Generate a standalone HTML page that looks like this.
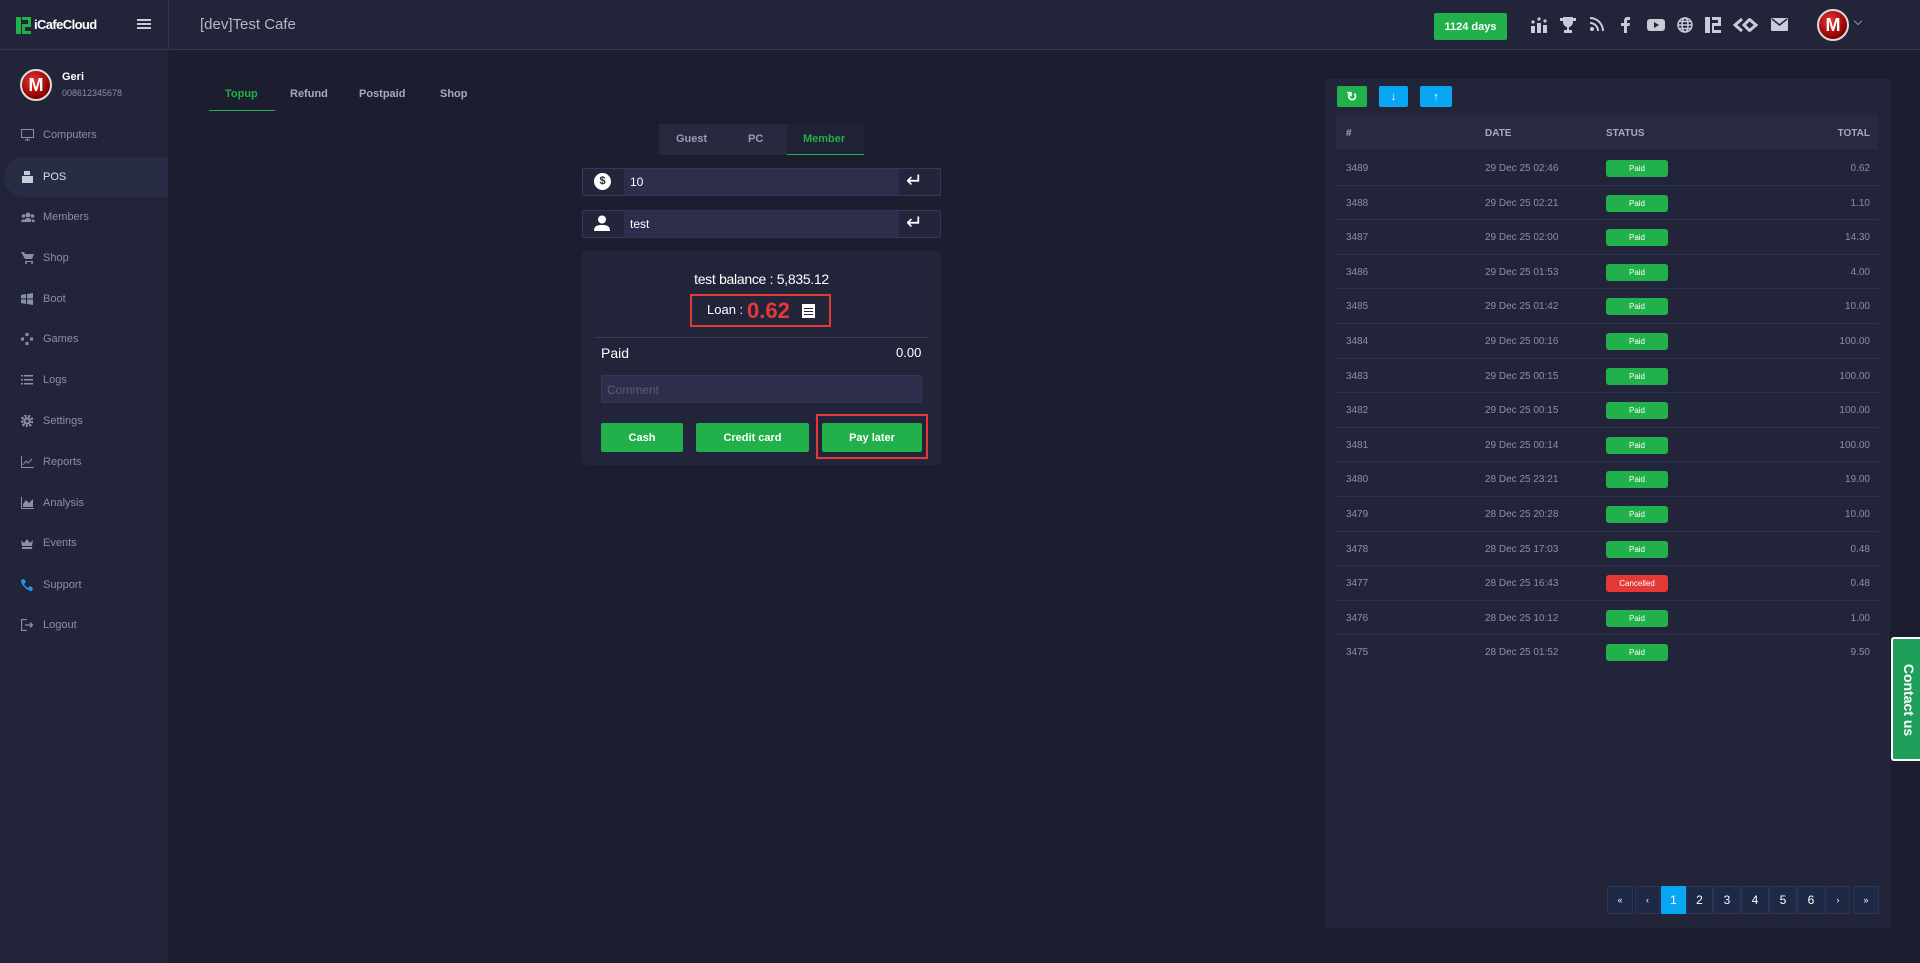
<!DOCTYPE html>
<html><head><meta charset="utf-8"><style>
*{box-sizing:border-box;margin:0;padding:0}
body{width:1920px;height:963px;background:#1c1d2e;font-family:"Liberation Sans",sans-serif;color:#c9ccd8;position:relative;overflow:hidden}
.abs{position:absolute}
.hdr{left:0;top:0;width:1920px;height:50px;background:#22253a;border-bottom:1px solid #33364f}
.side{left:0;top:50px;width:168px;height:913px;background:#22243a}
.mi{position:absolute;left:0;width:168px;height:40px;display:flex;align-items:center;font-size:11px;color:#8a8fa8}
.mi svg{position:absolute;left:21px}
.mi span{position:absolute;left:43px}
.tab{position:absolute;top:88px;font-size:11px;font-weight:bold;color:#a8abbd}
.btn{position:absolute;background:#22b04b;color:#fff;font-size:11px;font-weight:bold;display:flex;align-items:center;justify-content:center;border-radius:2px}
.row{position:absolute;left:1336px;width:542px;height:34.6px;border-bottom:1px solid #2f3150;font-size:10px;color:#8a8fa8}
.row span{position:absolute;top:12px}
.badge{position:absolute;left:270px;top:9px;width:62px;height:17px;border-radius:3px;background:#22b04b;color:#fff;font-size:8px;text-align:center;line-height:17px}
.pg{position:absolute;top:886px;height:28px;background:#1e2a45;border:1px solid #2c3455;color:#fff;font-size:12px;display:flex;align-items:center;justify-content:center}
.ic{position:absolute;top:17px;fill:#c8ccd8}
</style></head><body>
<div class="abs hdr"></div>
<div class="abs" style="left:168px;top:0;width:1px;height:50px;background:#33364f"></div>
<svg class="abs" style="left:16px;top:17px" width="15" height="17" viewBox="0 0 15 17" fill="#22b04b"><path d="M0 0h5v17H0zM6 0h9v10H9v4h6v3H6V7h6V3H6z"/></svg>
<div class="abs" style="left:34px;top:17px;font-size:13px;font-weight:bold;color:#fff;letter-spacing:-0.6px">iCafeCloud</div>
<div class="abs" style="left:137px;top:19px;width:14px;height:2px;background:#c8ccd8;box-shadow:0 4px 0 #c8ccd8,0 8px 0 #c8ccd8"></div>
<div class="abs" style="left:200px;top:16px;font-size:15px;color:#b4b7c6">[dev]Test Cafe</div>
<div class="btn" style="left:1434px;top:13px;width:73px;height:27px;font-size:11px">1124 days</div>
<svg class="ic" style="left:1531px" width="17" height="16" viewBox="0 0 17 16"><rect x="0" y="9" width="4" height="7"/><rect x="6" y="6" width="4" height="10"/><rect x="12" y="8" width="4" height="8"/><circle cx="2" cy="5" r="1.6"/><circle cx="8" cy="2" r="1.6"/><circle cx="14" cy="4" r="1.6"/></svg>
<svg class="ic" style="left:1560px" width="16" height="16" viewBox="0 0 16 16"><path d="M3 0h10v5a5 5 0 0 1-4 5v3h3v3H4v-3h3v-3A5 5 0 0 1 3 5zM0 1h3v3H0zM13 1h3v3h-3z"/></svg>
<svg class="ic" style="left:1590px" width="14" height="14" viewBox="0 0 14 14"><circle cx="2" cy="12" r="2"/><path d="M0 5a9 9 0 0 1 9 9H7a7 7 0 0 0-7-7zM0 0a14 14 0 0 1 14 14h-2A12 12 0 0 0 0 2z"/></svg>
<svg class="ic" style="left:1621px" width="9" height="16" viewBox="0 0 9 16"><path d="M6 0h3v3H7c-1 0-1 1-1 1v2h3l-.5 3H6v7H3V9H0V6h3V4c0-3 2-4 3-4z"/></svg>
<svg class="ic" style="left:1647px;top:19px" width="18" height="12" viewBox="0 0 18 12"><rect width="18" height="12" rx="3"/><path d="M7 3l5 3-5 3z" fill="#22253a"/></svg>
<svg class="ic" style="left:1677px;fill:none" width="16" height="16" viewBox="0 0 16 16" stroke="#c8ccd8" stroke-width="1.5"><circle cx="8" cy="8" r="7"/><ellipse cx="8" cy="8" rx="3" ry="7"/><path d="M1 8h14M2 4.5h12M2 11.5h12"/></svg>
<svg class="ic" style="left:1705px" width="16" height="16" viewBox="0 0 16 16"><path d="M0 0h5v16H0zM7 0h9v9h-7v4h7v3H7V6h6V3H7z"/></svg>
<svg class="ic" style="left:1733px;top:18px;fill:none" width="26" height="14" viewBox="0 0 26 14" stroke="#c8ccd8" stroke-width="3"><path d="M9 1L2 7l7 6M17 1l-6 6 6 6M16 1l7 6-7 6"/></svg>
<svg class="ic" style="left:1771px;top:18px" width="17" height="13" viewBox="0 0 17 13"><rect width="17" height="13" rx="1"/><path d="M1 1l7.5 6L16 1" fill="none" stroke="#22253a" stroke-width="1.5"/></svg>
<div class="abs" style="left:1817px;top:9px;width:32px;height:32px;border-radius:50%;background:radial-gradient(circle at 40% 35%,#e33,#800 70%);border:2px solid #ddd;color:#fff;font-weight:bold;font-size:18px;text-align:center;line-height:28px">M</div>
<div class="abs" style="left:1855px;top:18px;width:6px;height:6px;border-right:1px solid #8a8fa8;border-bottom:1px solid #8a8fa8;transform:rotate(45deg)"></div>

<div class="abs side"></div>
<div class="abs" style="left:20px;top:69px;width:32px;height:32px;border-radius:50%;background:radial-gradient(circle at 40% 35%,#e33,#800 70%);border:2px solid #ddd;color:#fff;font-weight:bold;font-size:18px;text-align:center;line-height:28px">M</div>
<div class="abs" style="left:62px;top:71px;font-size:11px;font-weight:bold;color:#fff">Geri</div>
<div class="abs" style="left:62px;top:88px;font-size:9px;color:#8a8fa8">008612345678</div>
<div class="abs" style="left:4px;top:157px;width:164px;height:40px;background:#292c45;border-radius:20px 0 0 20px"></div>
<div class="mi" style="top:115px"><svg width="13" height="12" viewBox="0 0 13 12" fill="none" stroke="#8a8fa8"><rect x=".5" y=".5" width="12" height="8"/><path d="M4 11h5M6.5 9v2"/></svg><span>Computers</span></div>
<div class="mi" style="top:157px;color:#dfe1ea"><svg width="13" height="12" viewBox="0 0 13 12" fill="#c8ccd8"><rect x="3" y="0" width="6" height="4"/><rect x="1" y="5" width="11" height="7"/></svg><span>POS</span></div>
<div class="mi" style="top:197px"><svg width="14" height="10" viewBox="0 0 14 10" fill="#8a8fa8"><circle cx="7" cy="3" r="2.5"/><circle cx="2.5" cy="4" r="1.8"/><circle cx="11.5" cy="4" r="1.8"/><path d="M3 10a4 4 0 0 1 8 0zM0 10a2.5 2.5 0 0 1 4-2v2zM14 10a2.5 2.5 0 0 0-4-2v2z"/></svg><span>Members</span></div>
<div class="mi" style="top:238px"><svg width="13" height="12" viewBox="0 0 13 12" fill="#8a8fa8"><path d="M0 0h3l1 2h9l-2 5H4zM4 9h8v1H4z"/><circle cx="5" cy="11" r="1"/><circle cx="11" cy="11" r="1"/></svg><span>Shop</span></div>
<div class="mi" style="top:279px"><svg width="12" height="12" viewBox="0 0 12 12" fill="#8a8fa8"><path d="M0 2l5-1v4.5H0zM6 1l6-1v5.5H6zM0 6.5h5V11l-5-1zM6 6.5h6V12l-6-1z"/></svg><span>Boot</span></div>
<div class="mi" style="top:319px"><svg width="12" height="12" viewBox="0 0 12 12" fill="#8a8fa8"><rect x="4.5" y="0" width="3" height="3"/><rect x="4.5" y="9" width="3" height="3"/><rect x="0" y="4.5" width="3" height="3"/><rect x="9" y="4.5" width="3" height="3"/></svg><span>Games</span></div>
<div class="mi" style="top:360px"><svg width="12" height="10" viewBox="0 0 12 10" fill="#8a8fa8"><rect y="0" width="2" height="1.5"/><rect x="3" y="0" width="9" height="1.5"/><rect y="4" width="2" height="1.5"/><rect x="3" y="4" width="9" height="1.5"/><rect y="8" width="2" height="1.5"/><rect x="3" y="8" width="9" height="1.5"/></svg><span>Logs</span></div>
<div class="mi" style="top:401px"><svg width="12" height="12" viewBox="0 0 12 12"><circle cx="6" cy="6" r="5" fill="none" stroke="#8a8fa8" stroke-width="3" stroke-dasharray="2 1.5"/><circle cx="6" cy="6" r="3.5" fill="#8a8fa8"/><circle cx="6" cy="6" r="1.5" fill="#22243a"/></svg><span>Settings</span></div>
<div class="mi" style="top:442px"><svg width="13" height="12" viewBox="0 0 13 12" fill="none" stroke="#8a8fa8"><path d="M.5 0v11.5H13M2 9l3-4 2 2 4-4"/></svg><span>Reports</span></div>
<div class="mi" style="top:483px"><svg width="13" height="12" viewBox="0 0 13 12" fill="#8a8fa8"><path d="M0 0h1v11h12v1H0zM2 10V7l3-4 3 3 4-4v8z"/></svg><span>Analysis</span></div>
<div class="mi" style="top:523px"><svg width="12" height="11" viewBox="0 0 12 11" fill="#8a8fa8"><path d="M0 2l3 3 3-4 3 4 3-3-1 6H1zM1 9h10v2H1z"/></svg><span>Events</span></div>
<div class="mi" style="top:565px"><svg width="12" height="12" viewBox="0 0 12 12" fill="#1e9bf0"><path d="M0 1l3-1 2 3-2 2c1 2 2 3 4 4l2-2 3 2-1 3C6 12 0 6 0 1z"/></svg><span>Support</span></div>
<div class="mi" style="top:605px"><svg width="12" height="12" viewBox="0 0 12 12" fill="none" stroke="#8a8fa8" stroke-width="1.3"><path d="M6 .5H.5v11H6M4 6h7M9 3.5 11.5 6 9 8.5"/></svg><span>Logout</span></div>

<div class="tab" style="left:225px;color:#22b04b">Topup</div>
<div class="abs" style="left:209px;top:110px;width:66px;height:1px;background:#22b04b"></div>
<div class="tab" style="left:290px">Refund</div>
<div class="tab" style="left:359px">Postpaid</div>
<div class="tab" style="left:440px">Shop</div>

<div class="abs" style="left:659px;top:124px;width:205px;height:31px;background:#272a3e;border-radius:2px"></div>
<div class="abs" style="left:787px;top:124px;width:77px;height:31px;background:#1f2134;border-bottom:1px solid #22b04b"></div>
<div class="abs" style="left:676px;top:133px;font-size:11px;font-weight:bold;color:#9a9db0">Guest</div>
<div class="abs" style="left:748px;top:133px;font-size:11px;font-weight:bold;color:#9a9db0">PC</div>
<div class="abs" style="left:803px;top:133px;font-size:11px;font-weight:bold;color:#22b04b">Member</div>

<div class="abs" style="left:582px;top:168px;width:359px;height:28px;border:1px solid #34375a;background:#23253b"></div>
<div class="abs" style="left:624px;top:169px;width:275px;height:26px;background:#2c2e4c"></div>
<div class="abs" style="left:594px;top:173px;width:17px;height:17px;border-radius:50%;background:#fff;color:#23253b;font-size:11px;font-weight:bold;text-align:center;line-height:17px">$</div>
<div class="abs" style="left:630px;top:175px;font-size:12px;color:#fff">10</div>
<div class="abs" style="left:906px;top:168px;font-size:20px;color:#fff;line-height:26px">&#8629;</div>
<div class="abs" style="left:582px;top:210px;width:359px;height:28px;border:1px solid #34375a;background:#23253b"></div>
<div class="abs" style="left:624px;top:211px;width:275px;height:26px;background:#2c2e4c"></div>
<svg class="abs" style="left:594px;top:215px" width="16" height="16" viewBox="0 0 16 16" fill="#fff"><circle cx="8" cy="4.5" r="4"/><path d="M0 16c0-5 3-6 8-6s8 1 8 6z"/></svg>
<div class="abs" style="left:630px;top:217px;font-size:12px;color:#fff">test</div>
<div class="abs" style="left:906px;top:210px;font-size:20px;color:#fff;line-height:26px">&#8629;</div>

<div class="abs" style="left:582px;top:251px;width:359px;height:214px;background:#22253a;border-radius:4px"></div>
<div class="abs" style="left:582px;top:271px;width:359px;text-align:center;font-size:14px;color:#fff;letter-spacing:-0.3px">test balance : 5,835.12</div>
<div class="abs" style="left:690px;top:294px;width:141px;height:33px;border:2px solid #e53935"></div>
<div class="abs" style="left:707px;top:302px;font-size:13px;color:#fff">Loan :</div>
<div class="abs" style="left:747px;top:298px;font-size:22px;font-weight:bold;color:#e53935">0.62</div>
<div class="abs" style="left:802px;top:304px;width:13px;height:14px;background:#fff;border:2px solid #fff"><div style="margin-top:2px;height:1px;background:#22253a;box-shadow:0 3px 0 #22253a,0 6px 0 #22253a"></div></div>
<div class="abs" style="left:594px;top:337px;width:335px;height:1px;background:#383b56"></div>
<div class="abs" style="left:601px;top:345px;font-size:14px;color:#fff">Paid</div>
<div class="abs" style="left:896px;top:345px;font-size:13px;color:#fff">0.00</div>
<div class="abs" style="left:601px;top:375px;width:321px;height:28px;background:#2c2e4c;border:1px solid #34375a;border-radius:2px"></div>
<div class="abs" style="left:607px;top:383px;font-size:12px;color:#5a5d78">Comment</div>
<div class="btn" style="left:601px;top:423px;width:82px;height:29px">Cash</div>
<div class="btn" style="left:696px;top:423px;width:113px;height:29px">Credit card</div>
<div class="btn" style="left:822px;top:423px;width:100px;height:29px">Pay later</div>
<div class="abs" style="left:816px;top:414px;width:112px;height:45px;border:2px solid #e53935"></div>

<div class="abs" style="left:1326px;top:79px;width:564px;height:849px;background:#22253a"></div>
<div class="btn" style="left:1337px;top:86px;width:30px;height:21px;font-size:13px">&#8635;</div>
<div class="btn" style="left:1379px;top:86px;width:29px;height:21px;background:#09a6f3;font-size:11px">&#8595;</div>
<div class="btn" style="left:1420px;top:86px;width:32px;height:21px;background:#09a6f3;font-size:11px">&#8593;</div>
<div class="abs" style="left:1336px;top:115px;width:542px;height:36px;background:#282b40;border-bottom:1px solid #1c1d2e;font-size:10px;font-weight:bold;color:#a8abbd">
<span style="position:absolute;left:10px;top:13px">#</span><span style="position:absolute;left:149px;top:13px">DATE</span><span style="position:absolute;left:270px;top:13px">STATUS</span><span style="position:absolute;right:8px;top:13px">TOTAL</span></div>
<div class="row" style="top:151px"><span style="left:10px">3489</span><span style="left:149px">29 Dec 25 02:46</span><div class="badge">Paid</div><span style="right:8px">0.62</span></div>
<div class="row" style="top:185.6px"><span style="left:10px">3488</span><span style="left:149px">29 Dec 25 02:21</span><div class="badge">Paid</div><span style="right:8px">1.10</span></div>
<div class="row" style="top:220.2px"><span style="left:10px">3487</span><span style="left:149px">29 Dec 25 02:00</span><div class="badge">Paid</div><span style="right:8px">14.30</span></div>
<div class="row" style="top:254.8px"><span style="left:10px">3486</span><span style="left:149px">29 Dec 25 01:53</span><div class="badge">Paid</div><span style="right:8px">4.00</span></div>
<div class="row" style="top:289.4px"><span style="left:10px">3485</span><span style="left:149px">29 Dec 25 01:42</span><div class="badge">Paid</div><span style="right:8px">10.00</span></div>
<div class="row" style="top:324px"><span style="left:10px">3484</span><span style="left:149px">29 Dec 25 00:16</span><div class="badge">Paid</div><span style="right:8px">100.00</span></div>
<div class="row" style="top:358.6px"><span style="left:10px">3483</span><span style="left:149px">29 Dec 25 00:15</span><div class="badge">Paid</div><span style="right:8px">100.00</span></div>
<div class="row" style="top:393.2px"><span style="left:10px">3482</span><span style="left:149px">29 Dec 25 00:15</span><div class="badge">Paid</div><span style="right:8px">100.00</span></div>
<div class="row" style="top:427.8px"><span style="left:10px">3481</span><span style="left:149px">29 Dec 25 00:14</span><div class="badge">Paid</div><span style="right:8px">100.00</span></div>
<div class="row" style="top:462.4px"><span style="left:10px">3480</span><span style="left:149px">28 Dec 25 23:21</span><div class="badge">Paid</div><span style="right:8px">19.00</span></div>
<div class="row" style="top:497px"><span style="left:10px">3479</span><span style="left:149px">28 Dec 25 20:28</span><div class="badge">Paid</div><span style="right:8px">10.00</span></div>
<div class="row" style="top:531.6px"><span style="left:10px">3478</span><span style="left:149px">28 Dec 25 17:03</span><div class="badge">Paid</div><span style="right:8px">0.48</span></div>
<div class="row" style="top:566.2px"><span style="left:10px">3477</span><span style="left:149px">28 Dec 25 16:43</span><div class="badge" style="background:#e53935">Cancelled</div><span style="right:8px">0.48</span></div>
<div class="row" style="top:600.8px"><span style="left:10px">3476</span><span style="left:149px">28 Dec 25 10:12</span><div class="badge">Paid</div><span style="right:8px">1.00</span></div>
<div class="row" style="top:635.4px;border-bottom:none"><span style="left:10px">3475</span><span style="left:149px">28 Dec 25 01:52</span><div class="badge">Paid</div><span style="right:8px">9.50</span></div>

<div class="pg" style="left:1607px;width:26px;font-size:9px">«</div>
<div class="pg" style="left:1635px;width:25px;font-size:9px">‹</div>
<div class="pg" style="left:1661px;width:25px;background:#09a6f3;border-color:#09a6f3">1</div>
<div class="pg" style="left:1686px;width:27px">2</div>
<div class="pg" style="left:1713px;width:28px">3</div>
<div class="pg" style="left:1741px;width:28px">4</div>
<div class="pg" style="left:1769px;width:28px">5</div>
<div class="pg" style="left:1797px;width:28px">6</div>
<div class="pg" style="left:1826px;width:24px;font-size:9px">›</div>
<div class="pg" style="left:1853px;width:26px;font-size:9px">»</div>

<div class="abs" style="left:1891px;top:637px;width:30px;height:124px;background:#1fa05a;border:2px solid #fff;border-right:none;border-radius:3px 0 0 3px"></div>
<div class="abs" style="left:1845px;top:690px;width:124px;height:20px;transform:rotate(90deg);text-align:center;color:#fff;font-size:14px;font-weight:bold">Contact us</div>
</body></html>
